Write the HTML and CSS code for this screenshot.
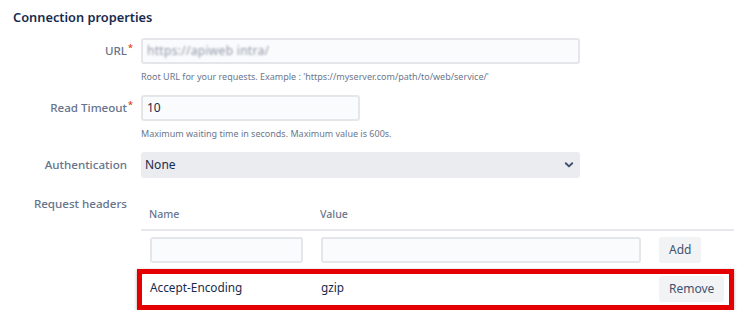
FILE: index.html
```html
<!DOCTYPE html>
<html lang="en">
<head>
<meta charset="utf-8">
<title>Connection properties</title>
<link rel="stylesheet" href="styles.css">
</head>
<body>
<div class="page">
  <h2 class="title">Connection properties</h2>

  <div class="field">
    <label class="lbl">URL<span class="req">*</span></label>
    <div class="ctl">
      <div class="input long"><span class="blur">https://apiweb intra/</span></div>
      <div class="help">Root URL for your requests. Example : 'https://myserver.com/path/to/web/service/'</div>
    </div>
  </div>

  <div class="field">
    <label class="lbl">Read Timeout<span class="req">*</span></label>
    <div class="ctl">
      <div class="input short">10</div>
      <div class="help">Maximum waiting time in seconds. Maximum value is 600s.</div>
    </div>
  </div>

  <div class="field">
    <label class="lbl">Authentication</label>
    <div class="ctl">
      <div class="select long">
        <span>None</span>
        <svg class="chev" width="10" height="8" viewBox="0 0 10 8"><path d="M1.8 2.3 L5 5.4 L8.2 2.3" fill="none" stroke="#42526e" stroke-width="2" stroke-linecap="round" stroke-linejoin="round"/></svg>
      </div>
    </div>
  </div>

  <div class="field headers">
    <label class="lbl top">Request headers</label>
    <div class="ctl">
      <div class="table">
        <div class="hrow grid">
          <span>Name</span>
          <span>Value</span>
          <span></span>
        </div>
        <div class="row grid">
          <div class="input"></div>
          <div class="input"></div>
          <button class="btn" type="button">Add</button>
        </div>
        <div class="row mark grid">
          <span class="cell">Accept-Encoding</span>
          <span class="cell">gzip</span>
          <button class="btn" type="button">Remove</button>
        </div>
      </div>
    </div>
  </div>
</div>
</body>
</html>
```

FILE: styles.css
```css
* { box-sizing: border-box; }

body {
  margin: 0;
  background: #ffffff;
  font-family: "Noto Sans", "Open Sans", sans-serif;
  color: #172b4d;
}

.page {
  width: 748px;
}

.title {
  margin: 0;
  padding: 7px 0 0 13px;
  font-size: 12.8px;
  line-height: 20px;
  font-weight: 600;
  color: #172b4d;
}

.field {
  display: grid;
  grid-template-columns: 127px 593px;
  column-gap: 14px;
  margin-top: 10px;
}

.field:first-of-type { margin-top: 11px; }

.lbl {
  text-align: right;
  font-size: 11.6px;
  line-height: 26px;
  font-weight: 500;
  color: #67738a;
  white-space: nowrap;
}

.lbl.top { line-height: 16px; }

.req {
  color: #de350b;
  font-size: 9px;
  vertical-align: top;
  margin-right: -6px;
  margin-left: 1px;
  line-height: 20px;
}

.ctl { min-width: 0; }

.input {
  height: 26px;
  border: 2px solid #e4e6ea;
  border-radius: 3px;
  background: #fafbfc;
  padding: 0 4px;
  font-size: 12px;
  line-height: 22px;
  color: #172b4d;
}

.long { width: 439px; }
.short { width: 219px; }

.blur {
  color: #8f98a8;
  filter: blur(1.1px);
  letter-spacing: 0.3px;
}

.help {
  margin-top: 5px;
  font-size: 9px;
  line-height: 16px;
  color: #6b778c;
}

.select {
  height: 26px;
  border-radius: 3px;
  background: #ebecf0;
  padding: 0 6px 0 4px;
  font-size: 12px;
  line-height: 26px;
  color: #172b4d;
  display: flex;
  align-items: center;
  justify-content: space-between;
}

.field.headers { margin-top: 18px; }

.table { width: 593px; }

.grid {
  display: grid;
  grid-template-columns: 153px 320px auto;
  column-gap: 18px;
  align-items: start;
}

.hrow {
  padding: 10px 0 7px 8px;
  font-size: 10.6px;
  line-height: 16px;
  font-weight: 500;
  color: #6b778c;
  border-bottom: 2px solid #e6e8ec;
}

.row {
  padding: 6px 0 6px 9px;
}

.btn {
  justify-self: start;
  height: 26px;
  padding: 0 10px;
  border: 0;
  border-radius: 3px;
  background: #f2f3f5;
  font-family: inherit;
  font-size: 12px;
  color: #42526e;
  line-height: 26px;
}

.row.mark {
  margin-left: -4px;
  width: 597px;
  border: 5px solid #e40000;
  box-shadow: 0 1px 3px rgba(0, 0, 0, 0.35);
  padding: 2px 0 3px 8px;
}

.cell {
  padding-top: 3px;
  font-size: 11.8px;
  line-height: 16px;
  color: #172b4d;
}
```
